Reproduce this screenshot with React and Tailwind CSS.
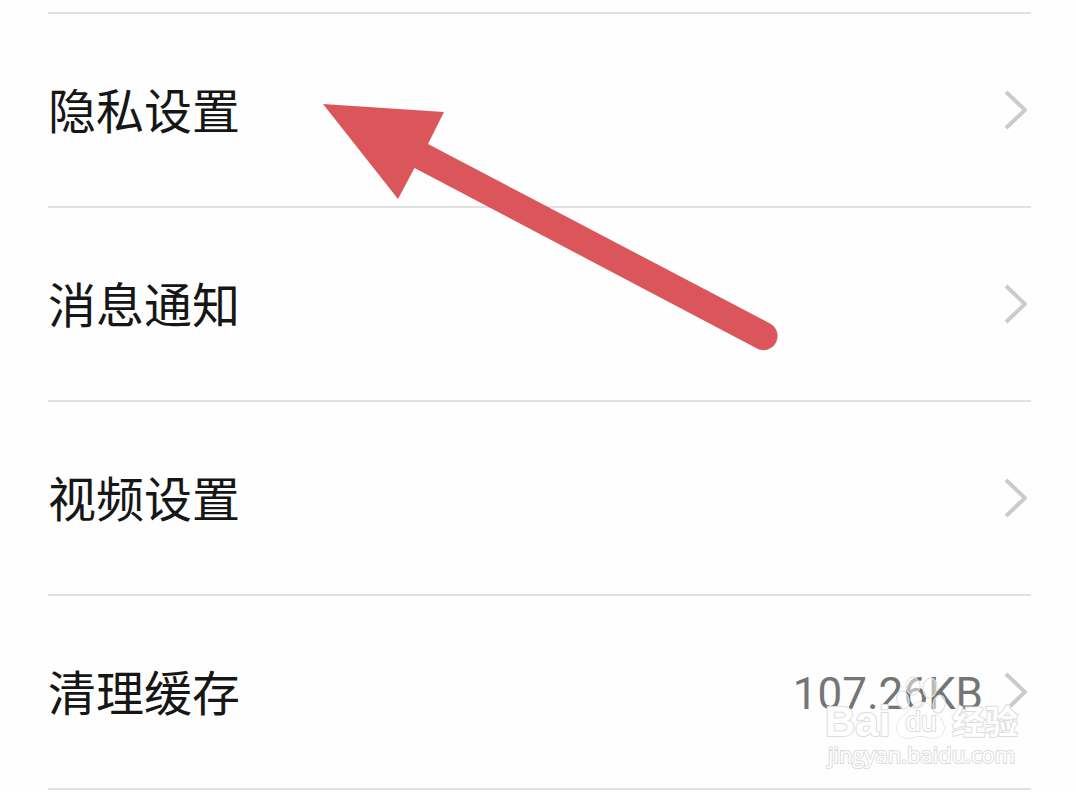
import React from "react";

const items = [
  { id: "privacy", label: "隐私设置" },
  { id: "notice", label: "消息通知" },
  { id: "video", label: "视频设置" },
  { id: "cache", label: "清理缓存", value: "107.26KB" },
];

const Chevron = () => (
  <svg className="h-10 w-6" viewBox="0 0 24 40" fill="none" stroke="#cbcbcb" strokeWidth="4" aria-hidden="true">
    <path d="M3 2 L22 20 L3 38" />
  </svg>
);

const Arrow = () => (
  <svg className="pointer-events-none absolute left-[320px] top-[100px] h-[256px] w-[464px]" viewBox="320 100 464 256" aria-hidden="true">
    <path
      d="M323 104 L444 112 L428 144 L770 323.500 A14 14 0 0 1 757 348.500 L414.500 168 L398 199 Z"
      fill="#db565b"
    />
  </svg>
);

const Watermark = () => (
  <div className="pointer-events-none absolute right-[58px] top-[676px] w-[193px] text-white [paint-order:stroke_fill] [-webkit-text-stroke:2px_#dcdcdc]">
    <div className="flex h-16 items-end justify-between">
      <span className="font-['Liberation_Sans',sans-serif] text-[42px] leading-9 font-bold">Bai</span>
      <div className="relative h-16 w-[50px]">
        <svg className="h-16 w-[50px]" viewBox="0 0 50 64" fill="#ffffff" fillOpacity="0.5" stroke="#d4d4d4" strokeWidth="1" aria-hidden="true">
          <ellipse cx="17" cy="10" rx="7" ry="9" />
          <ellipse cx="34" cy="12" rx="7" ry="10" transform="rotate(8 34 12)" />
          <ellipse cx="7" cy="24" rx="6" ry="9" transform="rotate(-12 7 24)" />
          <ellipse cx="43" cy="28" rx="6" ry="9" transform="rotate(12 43 28)" />
          <path fillOpacity="0.85" d="M25 26 C32 26 34 31 38 36 C43 41 48 44 48 52 C48 59 44 62 37 62 C32 62 29 60 25 60 C21 60 18 62 12 62 C5 62 1 59 1 52 C1 44 6 42 11 37 C16 31 18 26 25 26 Z" />
        </svg>
        <span className="absolute inset-x-0 bottom-1 text-center font-['Liberation_Sans',sans-serif] text-[28px] leading-7">du</span>
      </div>
      <span className="pb-1 font-['Noto_Sans_CJK_SC',sans-serif] text-[33px] leading-8 font-bold">经验</span>
    </div>
    <div className="whitespace-nowrap text-center font-['Open_Sans',sans-serif] text-[22px] leading-7 font-medium">
      jingyan.baidu.com
    </div>
  </div>
);

const App = () => {
  return (
    <main className="relative overflow-hidden bg-[#fefefe] pr-[45px] pl-12 pt-3">
      <ul className="border-t-2 border-[#e0e0e0]">
        {items.map((item) => (
          <li key={item.id} className="border-b-2 border-[#e0e0e0]">
            <a href={`#${item.id}`} className="flex h-48 items-center justify-between pr-1">
              <span className="pb-1 font-['Noto_Sans_CJK_SC',sans-serif] text-5xl text-[#161616]">{item.label}</span>
              <span className="flex items-center gap-5">
                {item.value && (
                  <span className="pt-1 font-['Roboto',sans-serif] text-[44px] leading-12 text-[#757575]">{item.value}</span>
                )}
                <Chevron />
              </span>
            </a>
          </li>
        ))}
      </ul>
      <Arrow />
      <Watermark />
    </main>
  );
};

export default App;
